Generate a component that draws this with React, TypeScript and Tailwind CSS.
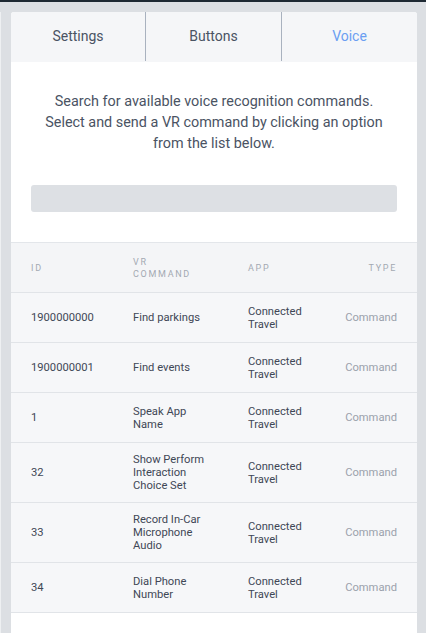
import React from "react";

const rows = [
  { id: "1900000000", cmd: "Find parkings" },
  { id: "1900000001", cmd: "Find events" },
  { id: "1", cmd: "Speak App Name" },
  { id: "32", cmd: "Show Perform Interaction Choice Set" },
  { id: "33", cmd: "Record In-Car Microphone Audio" },
  { id: "34", cmd: "Dial Phone Number" },
];

export default function App() {
  return (
    <div
      className="w-[426px] h-[633px] overflow-hidden bg-[#dcdfe3] flex flex-col"
      style={{ fontFamily: "Roboto, 'Noto Sans', sans-serif" }}
    >
      <div className="h-[2px] bg-[#1e2933] shrink-0" />
      <div className="flex flex-1 pt-[10px]">
        <div className="w-[1px] bg-[#eef0f2]" />
        <div className="w-[10px]" />
        <div className="w-[406px] bg-white rounded-t-[3px] flex flex-col">
          <div className="h-[50px] flex bg-[#f5f6f8] rounded-t-[3px] text-[14px] pb-[1px]">
            <div className="w-[135px] flex items-center justify-center text-[#4a5363] border-r border-[#a9b2bf]">
              Settings
            </div>
            <div className="w-[136px] flex items-center justify-center text-[#4a5363] border-r border-[#a9b2bf]">
              Buttons
            </div>
            <div className="flex-1 flex items-center justify-center text-[#6b9ef2]">
              Voice
            </div>
          </div>
          <div className="pt-[29px] pb-[30px] px-[14px]">
            <p className="text-center text-[14.4px] leading-[21px] text-[#4a5363]">
              Search for available voice recognition commands.
              <br />
              Select and send a VR command by clicking an option
              <br />
              from the list below.
            </p>
            <div className="mt-[31px] mx-[6px] h-[27px] rounded-[3px] bg-[#dde0e4]" />
          </div>
          <div className="border-t border-[#e3e6ea]">
            <div className="h-[50px] flex items-center bg-[#f4f5f7] border-b border-[#e1e4e8] px-[20px] text-[9px] leading-[12px] tracking-[1.7px] text-[#a3a9b2] uppercase">
              <div className="w-[102px]">ID</div>
              <div className="w-[115px]">
                VR
                <br />
                Command
              </div>
              <div className="w-[80px]">App</div>
              <div className="flex-1 text-right">Type</div>
            </div>
            {rows.map((r) => (
              <div
                key={r.id}
                className="min-h-[50px] flex items-center bg-[#f6f7f9] border-b border-[#e1e4e8] px-[20px] py-[10px] text-[11.2px] leading-[13px] text-[#3f4756]"
              >
                <div className="w-[102px]">{r.id}</div>
                <div className="w-[115px] pr-[38px]">{r.cmd}</div>
                <div className="w-[80px] pr-[20px]">Connected Travel</div>
                <div className="flex-1 text-right text-[#9ba2ac]">Command</div>
              </div>
            ))}
          </div>
        </div>
      </div>
    </div>
  );
}
